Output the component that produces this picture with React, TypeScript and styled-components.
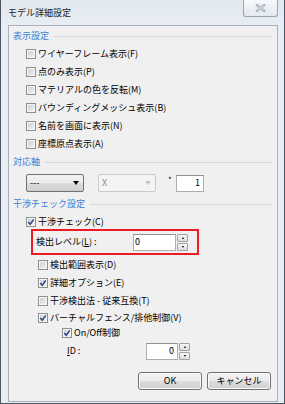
import React from "react";
import styled, { createGlobalStyle } from "styled-components";

const Global = createGlobalStyle`
  html, body { margin: 0; padding: 0; width: 285px; height: 404px; overflow: hidden; background: #e8edf3; }
  body { font-family: "Noto Sans CJK JP", "Noto Sans", sans-serif; font-size: 9px; color: #000; }
  * { box-sizing: border-box; }
`;

const Window = styled.div`
  width: 285px;
  height: 404px;
  display: flex;
  flex-direction: column;
  background: linear-gradient(#e2e8ef, #e9eef4 30px, #eaeef3);
  border-left: 1px solid #4a5663;
  border-right: 1px solid #4a5663;
  border-bottom: 1px solid #4a5663;
`;

const TitleBar = styled.div`
  height: 25px;
  flex: none;
  display: flex;
  align-items: flex-start;
  padding: 0 6px 0 7px;
`;

const Title = styled.div`
  margin-top: 7px;
  line-height: 12px;
  color: #1a1a1a;
  white-space: nowrap;
`;

const CloseButton = styled.div`
  margin-left: auto;
  width: 35px;
  height: 17px;
  border: 1px solid #97a4b3;
  border-top: none;
  border-radius: 0 0 3px 3px;
  background: linear-gradient(#f6f8fb, #e3e9f0);
  display: flex;
  align-items: center;
  justify-content: center;
`;

const Client = styled.div`
  flex: 1;
  margin: 0 6px 1px 7px;
  background: #f0f0f0;
  border: 1px solid #a8b1bb;
  display: flex;
  flex-direction: column;
  padding-top: 1px;
`;

const Section = styled.div`
  height: 18px;
  flex: none;
  display: flex;
  align-items: center;
  padding: 0 5px 0 4px;
  color: #3b7fd8;
  line-height: 12px;
  white-space: nowrap;
  &::after {
    content: "";
    flex: 1;
    height: 1px;
    background: #d3d8dd;
    margin-left: 5px;
  }
`;

const Row = styled.div<{ $indent: number; $h?: number; $mt?: number }>`
  height: ${(p) => p.$h ?? 18}px;
  margin-top: ${(p) => p.$mt ?? 0}px;
  flex: none;
  display: flex;
  align-items: center;
  padding-left: ${(p) => p.$indent}px;
  gap: 2px;
  line-height: 12px;
  white-space: nowrap;
`;

const Box = styled.span`
  width: 10px;
  height: 10px;
  flex: none;
  border: 1px solid #8e8f8f;
  background: linear-gradient(135deg, #c9ced4, #f3f4f5);
  box-shadow: inset 0 0 0 1px #f6f6f6;
  display: flex;
  align-items: center;
  justify-content: center;
`;

const Mn = styled.span`
  text-decoration: underline;
`;

const Check = ({ checked }: { checked?: boolean }) => (
  <Box>
    {checked && (
      <svg width="8" height="8" viewBox="0 0 8 8">
        <path d="M1.3 4 L3.2 6.2 L6.8 1.4" fill="none" stroke="#2e4483" strokeWidth="1.5" />
      </svg>
    )}
  </Box>
);

const ComboRow = styled.div`
  height: 24px;
  flex: none;
  display: flex;
  align-items: center;
  padding-left: 17px;
`;

const Combo = styled.div<{ $disabled?: boolean }>`
  width: 58px;
  height: 18px;
  display: flex;
  align-items: center;
  padding: 0 4px 0 3px;
  border: 1px solid ${(p) => (p.$disabled ? "#c9c9c9" : "#707070")};
  border-radius: 2px;
  color: ${(p) => (p.$disabled ? "#8d8d8d" : "#000")};
  background: ${(p) =>
    p.$disabled ? "#f4f4f4" : "linear-gradient(#f3f3f3 0%, #ebebeb 50%, #dcdcdc 51%, #d0d0d0 100%)"};
  margin-right: 14px;
  line-height: 12px;
`;

const Arrow = styled.span<{ $disabled?: boolean }>`
  margin-left: auto;
  width: 0;
  height: 0;
  border-left: 3px solid transparent;
  border-right: 3px solid transparent;
  border-top: 4px solid ${(p) => (p.$disabled ? "#c4c4c4" : "#000")};
`;

const Star = styled.span`
  align-self: flex-start;
  margin-top: 5px;
  margin-left: -2px;
  width: 8px;
  line-height: 8px;
  font-size: 8px;
`;

const TextBox = styled.div<{ $w: number; $h?: number; $right?: boolean }>`
  width: ${(p) => p.$w}px;
  height: ${(p) => p.$h ?? 17}px;
  background: #fff;
  border: 1px solid #abadb3;
  border-top-color: #8e9197;
  display: flex;
  align-items: center;
  justify-content: ${(p) => (p.$right ? "flex-end" : "flex-start")};
  padding: 0 3px 0 1px;
  line-height: 12px;
`;

const Highlight = styled.div`
  margin: -1px 0 0 22px;
  width: 168px;
  height: 26px;
  flex: none;
  border: 2px solid #ec1c24;
  display: flex;
  align-items: center;
  padding-left: 3px;
  line-height: 12px;
  white-space: nowrap;
`;

const Label = styled.span<{ $w: number }>`
  width: ${(p) => p.$w}px;
  flex: none;
`;

const Spinner = styled.div`
  width: 11px;
  height: 17px;
  margin-left: 1px;
  display: flex;
  flex-direction: column;
  gap: 1px;
`;

const SpinButton = styled.div<{ $down?: boolean }>`
  flex: 1;
  border: 1px solid #9da3ab;
  border-radius: 1px;
  background: linear-gradient(#f6f6f6, #dedede);
  display: flex;
  align-items: center;
  justify-content: center;
  &::after {
    content: "";
    width: 0;
    height: 0;
    border-left: 1.5px solid transparent;
    border-right: 1.5px solid transparent;
    ${(p) => (p.$down ? "border-top: 2px solid #000;" : "border-bottom: 2px solid #000;")}
  }
`;

const IdRow = styled.div`
  height: 22px;
  flex: none;
  display: flex;
  align-items: center;
  padding-left: 58px;
  line-height: 12px;
`;

const ButtonRow = styled.div`
  margin-top: 10px;
  display: flex;
  justify-content: flex-end;
  gap: 5px;
  padding-right: 6px;
`;

const Button = styled.button`
  width: 64px;
  height: 18px;
  padding: 0;
  font: inherit;
  line-height: 12px;
  color: #000;
  border: 1px solid #707070;
  border-radius: 3px;
  background: linear-gradient(#f2f2f2 0%, #ebebeb 50%, #dddddd 51%, #cfcfcf 100%);
  box-shadow: inset 0 0 0 1px #fbfbfb;
`;

const Spin = () => (
  <Spinner>
    <SpinButton />
    <SpinButton $down />
  </Spinner>
);

export default function App() {
  return (
    <>
      <Global />
      <Window>
        <TitleBar>
          <Title>モデル詳細設定</Title>
          <CloseButton>
            <svg width="11" height="8" viewBox="0 0 11 8">
              <path d="M2 1 L9 7 M9 1 L2 7" stroke="#a0abb8" strokeWidth="2.4" strokeLinecap="square" />
              <path d="M2 1 L9 7 M9 1 L2 7" stroke="#f4f6f8" strokeWidth="0.8" />
            </svg>
          </CloseButton>
        </TitleBar>
        <Client>
          <Section>表示設定</Section>
          <Row $indent={17}><Check /> ワイヤーフレーム表示(F)</Row>
          <Row $indent={17}><Check /> 点のみ表示(P)</Row>
          <Row $indent={17}><Check /> マテリアルの色を反転(M)</Row>
          <Row $indent={17}><Check /> バウンディングメッシュ表示(B)</Row>
          <Row $indent={17}><Check /> 名前を画面に表示(N)</Row>
          <Row $indent={17}><Check /> 座標原点表示(A)</Row>
          <Section>対応軸</Section>
          <ComboRow>
            <Combo>---<Arrow /></Combo>
            <Combo $disabled>X<Arrow $disabled /></Combo>
            <Star>*</Star>
            <TextBox $w={28} $h={17} $right>1</TextBox>
          </ComboRow>
          <Section>干渉チェック設定</Section>
          <Row $indent={17} $h={17}><Check checked /> 干渉チェック(C)</Row>
          <Highlight>
            <Label $w={97}>検出レベル(<Mn>L</Mn>) :</Label>
            <TextBox $w={43}>0</TextBox>
            <Spin />
          </Highlight>
          <Row $indent={29} $mt={1}><Check /> 検出範囲表示(D)</Row>
          <Row $indent={29}><Check checked /> 詳細オプション(E)</Row>
          <Row $indent={29}><Check /> 干渉検出法 - 従来互換(T)</Row>
          <Row $indent={29} $h={16}><Check checked /> バーチャルフェンス/排他制御(V)</Row>
          <Row $indent={53} $h={14}><Check checked /> On/Off制御</Row>
          <IdRow>
            <Label $w={79}><Mn>I</Mn>D :</Label>
            <TextBox $w={32} $right>0</TextBox>
            <Spin />
          </IdRow>
          <ButtonRow>
            <Button>OK</Button>
            <Button>キャンセル</Button>
          </ButtonRow>
        </Client>
      </Window>
    </>
  );
}
